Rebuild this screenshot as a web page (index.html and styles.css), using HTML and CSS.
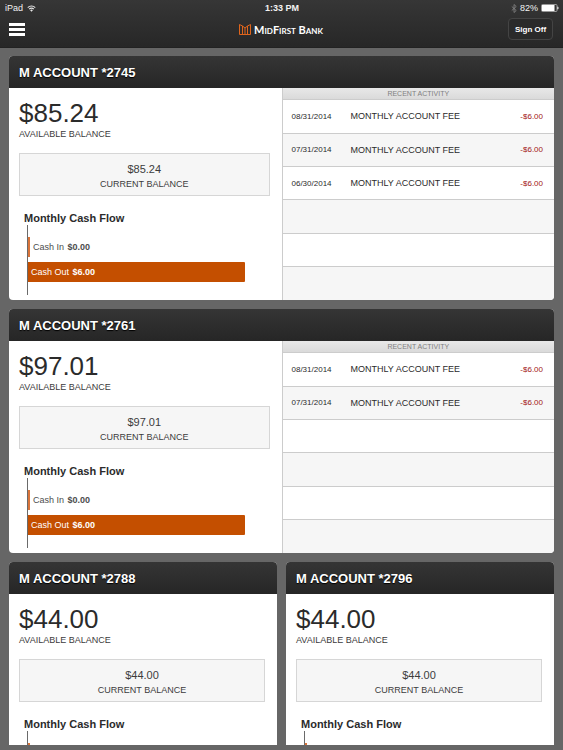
FILE: index.html
```html
<!DOCTYPE html>
<html lang="en">
<head>
    <meta charset="UTF-8">
    <meta name="viewport" content="width=device-width, initial-scale=1.0">
    <title>MidFirst Bank</title>
    <link rel="stylesheet" href="styles.css">
</head>
<body>
    <header class="header">
        <div class="status-bar">
            <div class="status-left">
                <span>iPad</span>
                <svg class="wifi" viewBox="0 0 18 14" aria-hidden="true">
                    <path d="M1.5 5.2a10.6 10.6 0 0 1 15 0M4.3 8.2a6.6 6.6 0 0 1 9.4 0" fill="none" stroke="#e8e8e8" stroke-width="2.1"/>
                    <path d="M9 13.4L6.2 10.6a4 4 0 0 1 5.6 0z" fill="#e8e8e8"/>
                </svg>
            </div>
            <strong>1:33 PM</strong>
            <div class="status-right">
                <svg class="bluetooth" viewBox="0 0 12 18" aria-hidden="true">
                    <path d="M1.5 5l9 8L6 17V1l4.5 4-9 8" fill="none" stroke="#8c8c8c" stroke-width="1.5"/>
                </svg>
                <span>82%</span>
                <svg class="battery" viewBox="0 0 36 16" aria-hidden="true">
                    <rect x="1" y="1" width="31" height="14" rx="2" fill="none" stroke="#bbb" stroke-width="1.5"/>
                    <rect x="2" y="2" width="25" height="12" fill="#fff"/>
                    <path d="M33.500 5.500q2 2.500 0 5z" fill="#fff" stroke="#fff"/>
                </svg>
            </div>
        </div>
        <div class="nav-bar">
            <button class="menu-button" aria-label="Menu">
                <span></span>
                <span></span>
                <span></span>
            </button>
            <div class="brand">
                <svg class="logo" viewBox="0 0 24 22" aria-hidden="true">
                    <path d="M1 1v20h22V1l-6 3v17M1 1l6 3v17M7 4l5 4 5-4M12 8v13" fill="none" stroke="#e0651c" stroke-width="2"/>
                </svg>
                <span class="brand-name">MidFirst Bank</span>
            </div>
            <button class="sign-off">Sign Off</button>
        </div>
    </header>

    <main class="accounts">
        <section class="card wide">
            <h2 class="card-title">M ACCOUNT *2745</h2>
            <div class="card-body">
                <div class="summary">
                    <div class="available">$85.24</div>
                    <div class="available-label">AVAILABLE BALANCE</div>
                    <div class="current">
                        <div class="current-amount">$85.24</div>
                        <div class="current-label">CURRENT BALANCE</div>
                    </div>
                    <h3 class="flow-title">Monthly Cash Flow</h3>
                    <div class="chart">
                        <div class="flow-row"><div class="bar-in"></div><span>Cash In <b>$0.00</b></span></div>
                        <div class="flow-row bar-out" style="width: 90%"><span>Cash Out <b>$6.00</b></span></div>
                    </div>
                </div>
                <div class="activity">
                    <h3 class="activity-title" id="activity2745">RECENT ACTIVITY</h3>
                    <table class="activity-table" aria-labelledby="activity2745">
                        <tr><td class="date">08/31/2014</td><td class="desc">MONTHLY ACCOUNT FEE</td><td class="amount">-$6.00</td></tr>
                        <tr><td class="date">07/31/2014</td><td class="desc">MONTHLY ACCOUNT FEE</td><td class="amount">-$6.00</td></tr>
                        <tr><td class="date">06/30/2014</td><td class="desc">MONTHLY ACCOUNT FEE</td><td class="amount">-$6.00</td></tr>
                        <tr><td colspan="3"></td></tr>
                        <tr><td colspan="3"></td></tr>
                        <tr><td colspan="3"></td></tr>
                    </table>
                </div>
            </div>
        </section>

        <section class="card wide">
            <h2 class="card-title">M ACCOUNT *2761</h2>
            <div class="card-body">
                <div class="summary">
                    <div class="available">$97.01</div>
                    <div class="available-label">AVAILABLE BALANCE</div>
                    <div class="current">
                        <div class="current-amount">$97.01</div>
                        <div class="current-label">CURRENT BALANCE</div>
                    </div>
                    <h3 class="flow-title">Monthly Cash Flow</h3>
                    <div class="chart">
                        <div class="flow-row"><div class="bar-in"></div><span>Cash In <b>$0.00</b></span></div>
                        <div class="flow-row bar-out" style="width: 90%"><span>Cash Out <b>$6.00</b></span></div>
                    </div>
                </div>
                <div class="activity">
                    <h3 class="activity-title" id="activity2761">RECENT ACTIVITY</h3>
                    <table class="activity-table" aria-labelledby="activity2761">
                        <tr><td class="date">08/31/2014</td><td class="desc">MONTHLY ACCOUNT FEE</td><td class="amount">-$6.00</td></tr>
                        <tr><td class="date">07/31/2014</td><td class="desc">MONTHLY ACCOUNT FEE</td><td class="amount">-$6.00</td></tr>
                        <tr><td colspan="3"></td></tr>
                        <tr><td colspan="3"></td></tr>
                        <tr><td colspan="3"></td></tr>
                        <tr><td colspan="3"></td></tr>
                    </table>
                </div>
            </div>
        </section>

        <section class="card">
            <h2 class="card-title">M ACCOUNT *2788</h2>
            <div class="summary">
                <div class="available">$44.00</div>
                <div class="available-label">AVAILABLE BALANCE</div>
                <div class="current">
                    <div class="current-amount">$44.00</div>
                    <div class="current-label">CURRENT BALANCE</div>
                </div>
                <h3 class="flow-title">Monthly Cash Flow</h3>
                <div class="chart">
                    <div class="flow-row"><div class="bar-in"></div></div>
                </div>
            </div>
        </section>

        <section class="card">
            <h2 class="card-title">M ACCOUNT *2796</h2>
            <div class="summary">
                <div class="available">$44.00</div>
                <div class="available-label">AVAILABLE BALANCE</div>
                <div class="current">
                    <div class="current-amount">$44.00</div>
                    <div class="current-label">CURRENT BALANCE</div>
                </div>
                <h3 class="flow-title">Monthly Cash Flow</h3>
                <div class="chart">
                    <div class="flow-row"><div class="bar-in"></div></div>
                </div>
            </div>
        </section>
    </main>
</body>
</html>
```
FILE: styles.css
```css
* {
    box-sizing: border-box;
}
body {
    display: flex;
    flex-direction: column;
    height: 100vh;
    margin: 0;
    background-color: #666666;
    color: #2b2b2b;
    font-family: "Liberation Sans", Arial, sans-serif;
    font-size: 9px;
}
h2, h3 {
    margin: 0;
}
button {
    font-family: inherit;
    cursor: pointer;
}
.header {
    flex: none;
    padding-bottom: 5px;
    background: linear-gradient(#363636, #272727);
    border-bottom: 1px solid #222222;
    color: #f2f2f2;
}
.status-bar, .nav-bar {
    display: grid;
    grid-template-columns: 1fr auto 1fr;
    align-items: center;
}
.status-bar {
    height: 16px;
    padding: 0 4px 0 5px;
}
.status-left, .status-right {
    display: flex;
    align-items: center;
    gap: 4px;
}
.status-right {
    justify-content: flex-end;
    gap: 3px;
}
.wifi {
    width: 9px;
    height: 7px;
}
.bluetooth {
    width: 6px;
    height: 9px;
}
.battery {
    width: 18px;
    height: 8px;
}
.nav-bar {
    height: 26px;
    padding: 0 10px 0 9px;
}
.menu-button {
    display: flex;
    flex-direction: column;
    gap: 2px;
    width: 16px;
    padding: 0;
    border: 0;
    background: none;
}
.menu-button span {
    height: 3px;
    background-color: #ffffff;
}
.brand {
    display: flex;
    align-items: center;
    gap: 3px;
}
.logo {
    width: 12px;
    height: 11px;
}
.brand-name {
    color: #ffffff;
    font-family: Lato, sans-serif;
    font-size: 11px;
    font-weight: bold;
    font-variant: small-caps;
}
.sign-off {
    justify-self: end;
    width: 45px;
    height: 22px;
    padding: 0;
    border: 1px solid #444444;
    border-radius: 4px;
    background-color: #2a2a2a;
    color: #ffffff;
    font-size: 8px;
    font-weight: bold;
}
.accounts {
    display: grid;
    grid-template-columns: 1fr 1fr;
    grid-auto-rows: max-content;
    align-content: start;
    gap: 9px;
    flex: 1;
    min-height: 0;
    margin-bottom: 5px;
    padding: 8px 9px 0;
    overflow-y: auto;
    scrollbar-width: none;
}
.card {
    border-radius: 4px;
    background-color: #ffffff;
    overflow: hidden;
}
.wide {
    grid-column: span 2;
}
.card-title {
    height: 32px;
    padding-left: 10px;
    background: linear-gradient(#353535, #262626);
    color: #ffffff;
    font-size: 13px;
    line-height: 33px;
    text-shadow: 0 1px 1px #000000;
}
.card-body {
    display: grid;
    grid-template-columns: 1fr 1fr;
}
.summary {
    padding: 10px 12px 5px 10px;
}
.available {
    font-size: 26px;
    line-height: 30px;
}
.available-label {
    color: #3c3c3c;
    line-height: 12px;
}
.current {
    margin-top: 13px;
    padding: 7px 0 4px;
    border: 1px solid #d6d6d6;
    background-color: #f6f6f6;
    color: #3c3c3c;
    text-align: center;
}
.current-amount {
    font-size: 11px;
    line-height: 16px;
}
.current-label {
    line-height: 14px;
}
.flow-title {
    margin-top: 15px;
    padding-left: 5px;
    font-size: 11px;
    line-height: 14px;
}
.chart {
    display: flex;
    flex-direction: column;
    gap: 5px;
    height: 70px;
    margin-left: 8px;
    padding-top: 12px;
    border-left: 1px solid #6a6a6a;
    color: #4d4d4d;
}
.flow-row {
    display: flex;
    align-items: center;
    gap: 3px;
    height: 20px;
}
.flow-row b {
    margin-left: 1px;
}
.bar-in {
    width: 2px;
    height: 20px;
    background-color: #d9743a;
}
.bar-out {
    padding-left: 3px;
    border-radius: 0 1px 1px 0;
    background-color: #c44f00;
    color: #ffffff;
}
.activity {
    display: flex;
    flex-direction: column;
    border-left: 1px solid #cccccc;
}
.activity-title {
    height: 12px;
    border-bottom: 1px solid #cccccc;
    background: linear-gradient(#e8e8e8, #dadada);
    color: #808080;
    font-size: 7px;
    font-weight: normal;
    line-height: 12px;
    text-align: center;
}
.activity-table {
    flex: 1;
    width: 100%;
    border-collapse: collapse;
}
.activity-table td {
    height: 33px;
    padding: 0;
    border-bottom: 1px solid #cccccc;
}
.activity-table tr:nth-child(even) {
    background-color: #f6f6f6;
}
.activity-table tr:last-child td {
    border-bottom: 0;
}
.activity-table .date {
    width: 68px;
    padding-left: 9px;
    font-size: 8px;
}
.activity-table .amount {
    padding-right: 11px;
    color: #a31515;
    font-size: 8px;
    text-align: right;
}
```
